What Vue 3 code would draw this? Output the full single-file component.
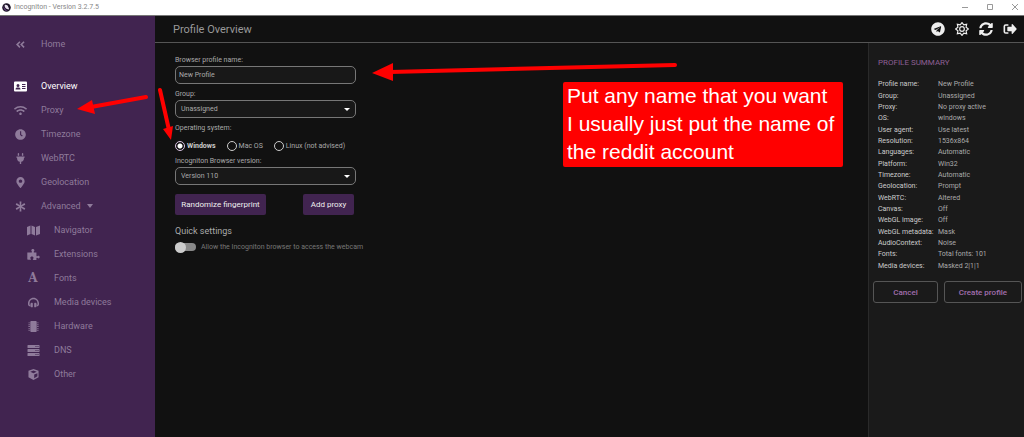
<template>
  <div class="app">
    <header class="titlebar">
      <svg class="app-logo" viewBox="0 0 20 20">
        <circle cx="10" cy="10" r="9.5" fill="#1c1426" />
        <path d="M6 4c4-1 7 1 8 5l2 5c-5 1-9-2-10-6z" fill="#e9e2f0" />
        <path d="M4 6c0 6 4 10 9 11-6 2-11-4-9-11z" fill="#70468c" />
      </svg>
      <span class="app-title">Incogniton - Version 3.2.7.5</span>
      <div class="window-controls">
        <button type="button" aria-label="Minimize">
          <svg viewBox="0 0 8 8"><path d="M1 4.500h6" /></svg>
        </button>
        <button type="button" aria-label="Maximize">
          <svg viewBox="0 0 8 8"><path d="M1.500 1.500h5v5h-5z" /></svg>
        </button>
        <button type="button" aria-label="Close">
          <svg viewBox="0 0 8 8"><path d="M1 1l6 6M7 1l-6 6" /></svg>
        </button>
      </div>
    </header>

    <div class="body">
      <nav class="sidebar">
        <a
          v-for="item in menu"
          :key="item.label"
          href="#"
          class="nav-item"
          :class="{ home: item.home, active: item.active, sub: item.sub }"
          @click.prevent
        >
          <span class="nav-icon">
            <span v-if="item.glyph" class="nav-glyph">{{ item.glyph }}</span>
            <svg v-else :viewBox="icons[item.icon].box"><path :d="icons[item.icon].d" /></svg>
          </span>
          <span>{{ item.label }}</span>
          <span v-if="item.caret" class="caret"></span>
        </a>
      </nav>

      <div class="workspace">
        <div class="topbar">
          <h1>Profile Overview</h1>
          <div class="actions">
            <button v-for="action in actions" :key="action.icon" type="button" :aria-label="action.label">
              <svg v-if="action.icon === 'sun'" class="sun" viewBox="0 0 24 24">
                <circle cx="12" cy="12" r="4" />
                <path d="M12 1l3 4 5-1-1 5 4 3-4 3 1 5-5-1-3 4-3-4-5 1 1-5-4-3 4-3-1-5 5 1z" />
              </svg>
              <svg v-else :viewBox="icons[action.icon].box"><path :d="icons[action.icon].d" /></svg>
            </button>
          </div>
        </div>

        <div class="columns">
          <main class="form">
            <div class="field">
              <label for="profile-name">Browser profile name:</label>
              <input id="profile-name" v-model="profileName" type="text" />
            </div>
            <div class="field">
              <label for="group">Group:</label>
              <div class="select">
                <select id="group" v-model="group">
                  <option>Unassigned</option>
                </select>
                <span class="caret"></span>
              </div>
            </div>
            <fieldset class="systems">
              <legend>Operating system:</legend>
              <div class="radios">
                <label v-for="os in systems" :key="os.value" :class="{ checked: system === os.value }">
                  <input v-model="system" type="radio" name="os" :value="os.value" />
                  {{ os.label }}
                </label>
              </div>
            </fieldset>
            <div class="field">
              <label for="version">Incogniton Browser version:</label>
              <div class="select">
                <select id="version" v-model="version">
                  <option>Version 110</option>
                </select>
                <span class="caret"></span>
              </div>
            </div>
            <div class="form-buttons">
              <button type="button">Randomize fingerprint</button>
              <button type="button">Add proxy</button>
            </div>
            <h2>Quick settings</h2>
            <label class="toggle">
              <input v-model="webcam" type="checkbox" />
              Allow the Incogniton browser to access the webcam
            </label>
          </main>

          <aside class="summary">
            <h2>PROFILE SUMMARY</h2>
            <dl>
              <div v-for="[name, value] in summary" :key="name">
                <dt>{{ name }}:</dt>
                <dd>{{ value }}</dd>
              </div>
            </dl>
            <div class="summary-buttons">
              <button type="button">Cancel</button>
              <button type="button">Create profile</button>
            </div>
          </aside>
        </div>
      </div>
    </div>

    <!-- Annotations -->
    <svg class="arrows" width="700" height="160" viewBox="0 0 700 160">
      <path class="shaft" d="M675 65L390 72M146 97L91 107M160 90L169 130" />
      <path d="M372 73L393 63V81zM77 109L92 100L95 114zM171 140L163 129L173 126z" />
    </svg>
    <p class="note">
      Put any name that you want<br />
      I usually just put the name of<br />
      the reddit account
    </p>
  </div>
</template>

<script setup>
import { ref } from 'vue'

const profileName = ref('New Profile')
const group = ref('Unassigned')
const system = ref('windows')
const version = ref('Version 110')
const webcam = ref(false)

const systems = [
  { value: 'windows', label: 'Windows' },
  { value: 'mac', label: 'Mac OS' },
  { value: 'linux', label: 'Linux (not advised)' }
]

const menu = [
  { label: 'Home', icon: 'back', home: true },
  { label: 'Overview', icon: 'card', active: true },
  { label: 'Proxy', icon: 'wifi' },
  { label: 'Timezone', icon: 'clock' },
  { label: 'WebRTC', icon: 'plug' },
  { label: 'Geolocation', icon: 'pin' },
  { label: 'Advanced', icon: 'asterisk', caret: true },
  { label: 'Navigator', icon: 'map', sub: true },
  { label: 'Extensions', icon: 'puzzle', sub: true },
  { label: 'Fonts', glyph: 'A', sub: true },
  { label: 'Media devices', icon: 'headphones', sub: true },
  { label: 'Hardware', icon: 'chip', sub: true },
  { label: 'DNS', icon: 'server', sub: true },
  { label: 'Other', icon: 'cube', sub: true }
]

const actions = [
  { icon: 'telegram', label: 'Telegram' },
  { icon: 'sun', label: 'Toggle theme' },
  { icon: 'sync', label: 'Synchronize' },
  { icon: 'logout', label: 'Log out' }
]

const summary = [
  ['Profile name', 'New Profile'],
  ['Group', 'Unassigned'],
  ['Proxy', 'No proxy active'],
  ['OS', 'windows'],
  ['User agent', 'Use latest'],
  ['Resolution', '1536x864'],
  ['Languages', 'Automatic'],
  ['Platform', 'Win32'],
  ['Timezone', 'Automatic'],
  ['Geolocation', 'Prompt'],
  ['WebRTC', 'Altered'],
  ['Canvas', 'Off'],
  ['WebGL image', 'Off'],
  ['WebGL metadata', 'Mask'],
  ['AudioContext', 'Noise'],
  ['Fonts', 'Total fonts: 101'],
  ['Media devices', 'Masked 2|1|1']
]

const icons = {
  back: {
    box: '0 0 24 24',
    d: 'M9 3l3 3-6 6 6 6-3 3-9-9zM20 3l3 3-6 6 6 6-3 3-9-9z'
  },
  card: {
    box: '0 0 26 20',
    d: 'M2 0h22q2 0 2 2v16q0 2-2 2H2q-2 0-2-2V2q0-2 2-2zM8 5a3 3 0 1 0 0 6a3 3 0 1 0 0-6zM3 16h10q0-4-3-4H6q-3 0-3 4zM16 5v2h7V5zM16 9v2h7V9zM16 13v2h7v-2z'
  },
  wifi: {
    box: '0 0 640 512',
    d: 'M634.900 154.900C457.700-9 182.200-8.900 5.100 154.900c-6.700 6.200-6.800 16.600-.4 23l34.200 33.900c6.100 6.100 16 6.200 22.400.4 145.900-133.700 371.300-133.700 517.300 0 6.400 5.900 16.200 5.700 22.400-.4l34.200-33.900c6.500-6.400 6.300-16.800-.3-23zM320 352c-35.300 0-64 28.700-64 64s28.700 64 64 64 64-28.700 64-64-28.700-64-64-64zm202.700-83.600c-115.300-101.900-290.200-101.800-405.300 0-6.900 6.100-7.100 16.700-.6 23.200l34.400 34c6 5.900 15.700 6.300 22.100.8 84-72.600 209.700-72.400 293.500 0 6.400 5.500 16.100 5.100 22.100-.8l34.400-34c6.500-6.500 6.300-17.100-.6-23.200z'
  },
  clock: {
    box: '0 0 512 512',
    d: 'M256 8C119 8 8 119 8 256s111 248 248 248 248-111 248-248S393 8 256 8zm70 340l-90-65V108h52v148l70 51z'
  },
  plug: {
    box: '0 0 384 512',
    d: 'M320 32a32 32 0 0 0-64 0v96h64zm48 128H16c-9 0-16 7-16 16v32c0 9 7 16 16 16h16v32c0 77 55 142 128 157v99h64v-99c73-15 128-80 128-157v-32h16c9 0 16-7 16-16v-32c0-9-7-16-16-16zM128 32a32 32 0 0 0-64 0v96h64z'
  },
  pin: {
    box: '0 0 384 512',
    d: 'M172 502C27 291 0 270 0 192 0 86 86 0 192 0s192 86 192 192c0 78-27 99-172 310-10 13-30 13-40 0zM192 272c44 0 80-36 80-80s-36-80-80-80-80 36-80 80 36 80 80 80z'
  },
  asterisk: {
    box: '0 0 24 24',
    d: 'M10 1h4l-.5 8.500 7-5 2 3.500-7.500 4 7.500 4-2 3.500-7-5L14 23h-4l.500-8.500-7 5-2-3.500L9 12 1.500 8l2-3.500 7 5z'
  },
  map: {
    box: '0 0 26 22',
    d: 'M0 4l7-3v17l-7 3zM9 1l7 3v17l-7-3zM18 4l8-3v17l-8 3z'
  },
  puzzle: {
    box: '0 0 576 512',
    d: 'M519 313c-31 0-36 28-72 28-18 0-23-12-23-55V160c-58 0-128 10-128-22 0-29 32-39 32-74 0-33-29-64-72-64s-68 29-68 66c0 33 28 40 28 72 0 32-70 22-216 22v330c49 8 170 22 170-5 0-30-30-37-30-70 0-36 30-65 74-65s74 30 74 65c0 33-31 40-31 70 0 27 82 27 167 25v-44c0-43 5-55 23-55 36 0 41 28 72 28 35 0 57-29 57-61 0-34-22-65-57-65z'
  },
  headphones: {
    box: '0 0 512 512',
    d: 'M192 272h-16c-35 0-64 29-64 64v80c0 35 29 64 64 64h16c18 0 32-14 32-32V304c0-18-14-32-32-32zm144 0h-16c-18 0-32 14-32 32v144c0 18 14 32 32 32h16c35 0 64-29 64-64v-80c0-35-29-64-64-64zM256 32C113 32 5 151 0 288v48c0 53 43 96 96 96v-64c-18 0-24-14-24-32v-48c0-106 78-184 184-184s184 78 184 184v48c0 18-6 32-24 32v64c53 0 96-43 96-96v-48C507 151 399 32 256 32z'
  },
  chip: {
    box: '0 0 24 24',
    d: 'M7 0h10q2 0 2 2v20q0 2-2 2H7q-2 0-2-2V2q0-2 2-2zM1 3h3v2H1zM1 7h3v2H1zM1 11h3v2H1zM1 15h3v2H1zM1 19h3v2H1zM20 3h3v2h-3zM20 7h3v2h-3zM20 11h3v2h-3zM20 15h3v2h-3zM20 19h3v2h-3z'
  },
  server: {
    box: '0 0 24 22',
    d: 'M1 0h22q1 0 1 1v4q0 1-1 1H1q-1 0-1-1V1q0-1 1-1zM1 8h22q1 0 1 1v4q0 1-1 1H1q-1 0-1-1V9q0-1 1-1zM1 16h22q1 0 1 1v4q0 1-1 1H1q-1 0-1-1v-4q0-1 1-1zM16 2v2h2V2zM20 2v2h2V2zM16 10v2h2v-2zM20 10v2h2v-2zM16 18v2h2v-2zM20 18v2h2v-2z'
  },
  cube: {
    box: '0 0 24 24',
    d: 'M12 0l11 4v14l-11 6-11-6V4zM12 3L5 6l7 3 7-3zM13.500 12v8l7-4V9z'
  },
  telegram: {
    box: '0 0 496 512',
    d: 'M248 8C111 8 0 119 0 256s111 248 248 248 248-111 248-248S385 8 248 8zM363 176l-41 192c-3 14-11 17-22 11l-62-46-30 29c-4 4-7 7-13 7l4-64 116-104c5-5-1-7-8-3L164 288l-61-19c-13-4-13-13 3-20l240-92c11-4 21 3 17 19z'
  },
  sync: {
    box: '0 0 512 512',
    d: 'M370.700 133.300C339.500 104 299 88 255.800 88c-77.500.1-144.300 53.200-162.800 126.900-1.300 5.400-6.100 9.100-11.700 9.100H24.100c-7.500 0-13.200-6.800-11.800-14.200C33.900 94.900 134.800 8 256 8c66.400 0 126.800 26.100 171.300 68.700L463 41c15.100-15.100 41-4.400 41 17v134c0 13.300-10.700 24-24 24H346c-21.400 0-32.100-25.900-17-41zM32 296h134c21.400 0 32.100 25.900 17 41l-41.800 41.800c31.300 29.300 71.800 45.300 114.900 45.200 77.400-.1 144.300-53.100 162.800-126.800 1.300-5.400 6.100-9.200 11.700-9.200h57.300c7.500 0 13.200 6.800 11.800 14.200C478.100 417.100 377.200 504 256 504c-66.400 0-126.800-26.100-171.300-68.700L49 471c-15.100 15.100-41 4.400-41-17V320c0-13.300 10.700-24 24-24z'
  },
  logout: {
    box: '0 0 26 22',
    d: 'M10 2v3H5q-1 0-1 1v10q0 1 1 1h5v3H5q-4 0-4-4V6q0-4 4-4zM16 3q0-2 2-1l7 8q1 1 0 2l-7 8q-2 1-2-1v-4H9q-1 0-1-1V8q0-1 1-1h7z'
  }
}
</script>

<style>
body {
  margin: 0;
  background-color: #111;
}
</style>

<style scoped>
.app {
  position: relative;
  display: flex;
  flex-direction: column;
  min-height: 100vh;
  box-sizing: border-box;
  font-family: Roboto, "Liberation Sans", sans-serif;
  font-size: 7px;
  color: #aaa;
  background-color: #111;
}

.app *,
.app *::before {
  box-sizing: border-box;
}

button,
input,
select {
  font: inherit;
  color: inherit;
  margin: 0;
}

h1,
h2,
p,
dl,
dd {
  margin: 0;
  font-weight: 400;
}

/* Title bar */
.titlebar {
  display: flex;
  align-items: center;
  gap: 3px;
  height: 16px;
  padding: 0 5px 1px 2px;
  background-color: #fff;
  border-bottom: 1px solid #777;
  color: #888;
}

.app-logo {
  width: 9px;
  height: 9px;
}

.app-title {
  flex: 1;
}

.window-controls {
  display: flex;
  gap: 17px;
}

.window-controls button {
  display: flex;
  padding: 0;
  border: 0;
  background: none;
}

.window-controls svg {
  width: 8px;
  height: 8px;
  fill: none;
  stroke: #999;
}

.body {
  display: flex;
  flex: 1;
}

/* Sidebar */
.sidebar {
  flex: 0 0 155px;
  padding-top: 16px;
  background-color: #412450;
}

.nav-item {
  display: flex;
  align-items: center;
  height: 24px;
  padding-left: 13px;
  font-size: 9px;
  color: #8f7b9b;
  text-decoration: none;
}

.nav-item.home {
  margin-bottom: 18px;
}

.nav-item.sub {
  padding-left: 26px;
}

.nav-item.active {
  color: #fff;
}

.nav-icon {
  display: flex;
  justify-content: center;
  width: 14px;
  margin-right: 14px;
}

.nav-icon svg {
  width: 13px;
  height: 11px;
  fill: currentColor;
  fill-rule: evenodd;
}

.nav-item.home svg {
  height: 9px;
}

.nav-glyph {
  font-family: "DejaVu Serif", serif;
  font-size: 12px;
  font-weight: 700;
  line-height: 12px;
}

.caret {
  border: 3px solid transparent;
  border-top: 4px solid currentColor;
  border-bottom: 0;
}

.nav-item .caret {
  margin-left: 6px;
}

/* Top bar */
.workspace {
  display: flex;
  flex: 1;
  flex-direction: column;
}

.topbar {
  display: flex;
  align-items: center;
  justify-content: space-between;
  height: 27px;
  padding: 0 7px 0 18px;
  border-bottom: 1px solid #555;
}

.topbar h1 {
  font-size: 11px;
  color: #999;
}

.actions {
  display: flex;
  gap: 10px;
}

.actions button {
  display: flex;
  padding: 0;
  border: 0;
  background: none;
  color: #eee;
}

.actions svg {
  width: 14px;
  height: 14px;
  fill: currentColor;
  fill-rule: evenodd;
}

.actions .sun {
  fill: none;
  stroke: currentColor;
  stroke-width: 2;
}

.columns {
  display: flex;
  flex: 1;
}

/* Form */
.form {
  flex: 1;
  padding: 11px 20px;
}

.field,
.systems,
.form-buttons {
  width: 181px;
}

.field label,
.systems legend {
  display: block;
  padding: 0;
  line-height: 12px;
}

.field input,
.field select {
  display: block;
  width: 100%;
  height: 18px;
  padding: 0 3px;
  border: 1px solid #777;
  border-radius: 5px;
  background-color: #181818;
  appearance: none;
}

.field select {
  padding: 0 5px;
}

.field + .field {
  margin-top: 4px;
}

.select {
  position: relative;
}

.select .caret {
  position: absolute;
  top: 8px;
  right: 6px;
  border-top-width: 3px;
  color: #fff;
  pointer-events: none;
}

.systems {
  margin: 4px 0 3px;
  padding: 0;
  border: 0;
}

.radios {
  display: flex;
  gap: 11px;
  padding-top: 6px;
  white-space: nowrap;
}

.radios label {
  display: flex;
  align-items: center;
  gap: 2px;
  height: 12px;
}

.radios .checked {
  font-weight: 700;
  color: #ccc;
}

.radios input {
  width: 10px;
  height: 10px;
  border: 1px solid #ccc;
  border-radius: 50%;
  appearance: none;
}

.radios input:checked {
  border-color: #d9c3e2;
  background: radial-gradient(circle, #fff 2px, transparent 3px);
}

.form-buttons {
  display: grid;
  grid-template-columns: 91px 51px;
  justify-content: space-between;
  margin-top: 9px;
  padding-right: 2px;
}

.form-buttons button {
  height: 21px;
  padding: 0;
  border: 0;
  border-radius: 2px;
  background-color: #412450;
  font-size: 8px;
  color: #eee;
}

.form h2 {
  margin-top: 10px;
  font-size: 9px;
  line-height: 12px;
}

.toggle {
  display: flex;
  align-items: center;
  gap: 5px;
  margin-top: 6px;
  color: #777;
}

.toggle input {
  display: flex;
  align-items: center;
  width: 21px;
  height: 8px;
  border-radius: 4px;
  background-color: #888;
  appearance: none;
}

.toggle input::before {
  content: "";
  width: 11px;
  height: 11px;
  flex: none;
  border-radius: 50%;
  background-color: #ccc;
}

.toggle input:checked {
  justify-content: flex-end;
}

/* Summary */
.summary {
  flex: 0 0 156px;
  padding: 14px 2px 0 4px;
  border-left: 1px solid #2a2a2a;
  background-color: #1a1a1a;
}

.summary h2 {
  padding-left: 5px;
  font-size: 8px;
  line-height: 12px;
  color: #8d5f93;
}

.summary dl {
  display: grid;
  grid-auto-rows: 1fr;
  height: 193px;
  margin-top: 10px;
  padding-left: 5px;
}

.summary dl div {
  display: grid;
  grid-template-columns: 60px 1fr;
  align-items: center;
  line-height: 11px;
}

.summary dt {
  color: #ccc;
}

.summary-buttons {
  display: grid;
  grid-template-columns: 65px 1fr;
  gap: 6px;
  margin-top: 9px;
}

.summary-buttons button {
  height: 22px;
  padding: 0;
  border: 1px solid #555;
  border-radius: 3px;
  background: none;
  font-size: 8px;
  font-weight: 500;
  color: #a36fae;
}

/* Annotations */
.arrows {
  position: absolute;
  top: 0;
  left: 0;
  fill: #f00;
  pointer-events: none;
}

.arrows .shaft {
  fill: none;
  stroke: #f00;
  stroke-width: 4;
  stroke-linecap: round;
}

.note {
  position: absolute;
  top: 82px;
  left: 563px;
  padding: 0 9px 1px 4px;
  border-radius: 2px;
  background-color: #f00;
  font-family: "Liberation Sans", sans-serif;
  font-size: 21px;
  line-height: 28px;
  color: #fff;
  white-space: nowrap;
}
</style>
